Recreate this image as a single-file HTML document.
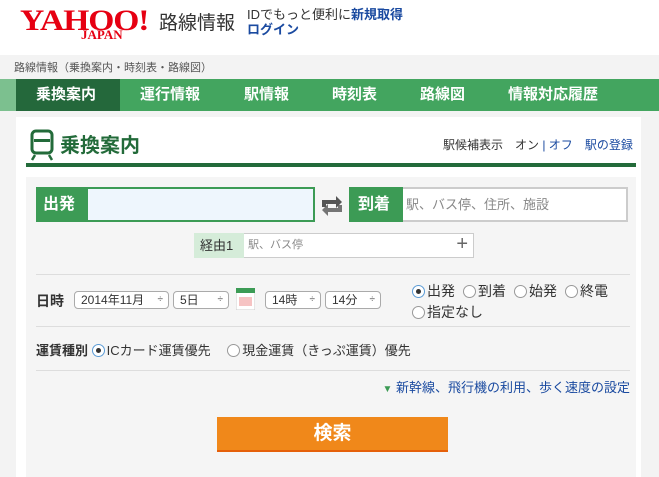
<!DOCTYPE html>
<html><head><meta charset="utf-8"><style>
*{margin:0;padding:0;box-sizing:border-box}
body{width:659px;height:472px;overflow:hidden;background:#f3f3f3;font-family:"Liberation Sans","Noto Sans CJK JP",sans-serif;position:relative;font-size:13px;color:#333}
.a{position:absolute}
.top{left:0;top:0;width:659px;height:55px;background:#fff}
.nav{left:0;top:79px;width:659px;height:32px;background:#43a55f}
.nav span{position:absolute;top:0;line-height:32px;color:#fff;font-size:15px;font-weight:bold}
.sel{font-size:12px;border:1px solid #aaa;border-radius:4px;background:#fff;height:18px;line-height:16px;padding-left:6px;top:291px}
.sel:after{content:"÷";position:absolute;right:5px;font-size:10px;color:#555}
.rad{display:inline-block;width:13px;height:13px;border:1px solid #999;border-radius:50%;background:#fff;vertical-align:-2px;margin-right:2px;position:relative}
.rad.on:after{content:"";position:absolute;left:3px;top:3px;width:5px;height:5px;border-radius:50%;background:#333}
.rad.on{border-color:#5b9bd5}
.r{margin-right:8px}
</style></head><body>
<div class="a top"></div>
<div class="a" style="left:20px;top:4px;font-family:'Liberation Serif',serif;font-size:30px;color:#e60012;font-weight:bold;letter-spacing:-1px;transform:scaleX(1.12);transform-origin:0 0">YAHOO!</div>
<div class="a" style="left:81px;top:27px;font-family:'Liberation Serif',serif;font-size:13px;color:#e60012;font-weight:bold">JAPAN</div>
<div class="a" style="left:159px;top:8px;font-size:19px;color:#333">路線情報</div>
<div class="a" style="left:247px;top:4px;font-size:13px">IDでもっと便利に<b style="color:#1a4aa0">新規取得</b></div>
<div class="a" style="left:247px;top:19px;font-size:13px;font-weight:bold;color:#1a4aa0">ログイン</div>
<div class="a" style="left:14px;top:59px;font-size:11px;color:#555">路線情報（乗換案内・時刻表・路線図）</div>
<div class="a nav">
<div class="a" style="left:0;top:0;width:16px;height:32px;background:#7cc08f"></div>
<div class="a" style="left:16px;top:0;width:104px;height:32px;background:#24683b"></div>
<span style="left:36px">乗換案内</span><span style="left:140px">運行情報</span><span style="left:244px">駅情報</span><span style="left:332px">時刻表</span><span style="left:420px">路線図</span><span style="left:508px">情報対応履歴</span></div>
<div class="a" style="left:16px;top:117px;width:625px;height:360px;background:#fff"></div>
<svg class="a" style="left:30px;top:129px" width="24" height="32" viewBox="0 0 24 32"><rect x="2" y="2" width="20" height="22" rx="4" fill="none" stroke="#236b3a" stroke-width="3"/><rect x="4" y="10" width="16" height="3" fill="#236b3a"/><path d="M5 26l-3 5M19 26l3 5" stroke="#236b3a" stroke-width="2.5"/></svg>
<div class="a" style="left:60px;top:129px;font-size:20px;font-weight:bold;color:#236b3a">乗換案内</div>
<div class="a" style="left:443px;top:136px;font-size:12px">駅候補表示　オン <span style="color:#1a4aa0">| オフ</span>　<span style="color:#1a4aa0">駅の登録</span></div>
<div class="a" style="left:26px;top:163px;width:610px;height:4px;background:#236b3a"></div>
<div class="a" style="left:26px;top:177px;width:610px;height:300px;background:#f5f5f5"></div>
<div class="a" style="left:36px;top:187px;width:52px;height:35px;background:#3c9b55;color:#fff;font-weight:bold;font-size:16px;line-height:35px;padding-left:7px">出発</div>
<div class="a" style="left:88px;top:187px;width:227px;height:35px;background:#eef6fd;border:2px solid #3c9b55;border-left:0"></div>
<svg class="a" style="left:320px;top:194px" width="24" height="24" viewBox="0 0 24 24" fill="#555"><path d="M2 6h14V2l6 6-6 6v-4H6v3H2z"/><path d="M22 18H8v4l-6-6 6-6v4h10v-3h4z" opacity=".8"/></svg>
<div class="a" style="left:349px;top:187px;width:54px;height:35px;background:#3c9b55;color:#fff;font-weight:bold;font-size:16px;line-height:35px;padding-left:9px">到着</div>
<div class="a" style="left:403px;top:187px;width:225px;height:35px;background:#fff;border:2px solid #ccc;border-left:0;color:#888;font-size:13px;line-height:31px;padding-left:3px">駅、バス停、住所、施設</div>
<div class="a" style="left:194px;top:233px;width:50px;height:25px;background:#d5ecd9;font-size:13px;line-height:25px;padding-left:6px">経由1</div>
<div class="a" style="left:244px;top:233px;width:230px;height:25px;background:#fff;border:1px solid #ccc;border-left:0;color:#888;font-size:11px;line-height:23px;padding-left:4px">駅、バス停<span style="position:absolute;right:5px;font-size:20px;color:#666;top:-1px">+</span></div>
<div class="a" style="left:36px;top:274px;width:594px;height:1px;background:#ddd"></div>
<div class="a" style="left:36px;top:291px;font-weight:bold;font-size:14px">日時</div>
<div class="a sel" style="left:74px;width:95px">2014年11月</div>
<div class="a sel" style="left:173px;width:56px">5日</div>
<svg class="a" style="left:236px;top:288px" width="19" height="22"><rect x="0" y="0" width="19" height="22" fill="#fff" stroke="#ccc"/><rect x="0" y="0" width="19" height="5" fill="#3c9b55"/><g fill="#e88"><rect x="3" y="9" width="13" height="9" opacity=".5"/></g></svg>
<div class="a sel" style="left:265px;width:56px">14時</div>
<div class="a sel" style="left:325px;width:56px">14分</div>
<div class="a" style="left:412px;top:281px;font-size:14px;line-height:21px;width:230px"><span class="rad on"></span>出発<span class="r"></span><span class="rad"></span>到着<span class="r"></span><span class="rad"></span>始発<span class="r"></span><span class="rad"></span>終電<br><span class="rad"></span>指定なし</div>
<div class="a" style="left:36px;top:326px;width:594px;height:1px;background:#ddd"></div>
<div class="a" style="left:36px;top:340px;font-size:13px"><b>運賃種別</b> <span class="rad on"></span>ICカード運賃優先　 <span class="rad"></span>現金運賃（きっぷ運賃）優先</div>
<div class="a" style="left:36px;top:370px;width:594px;height:1px;background:#ddd"></div>
<div class="a" style="right:29px;top:377px;font-size:13px;color:#1a4aa0"><span style="color:#3c9b55;font-size:10px">▼</span> 新幹線、飛行機の利用、歩く速度の設定</div>
<div class="a" style="left:217px;top:417px;width:231px;height:35px;background:#f0881a;border-bottom:2px solid #e5600a;color:#fff;font-size:19px;font-weight:bold;text-align:center;line-height:34px">検索</div>
</body></html>
